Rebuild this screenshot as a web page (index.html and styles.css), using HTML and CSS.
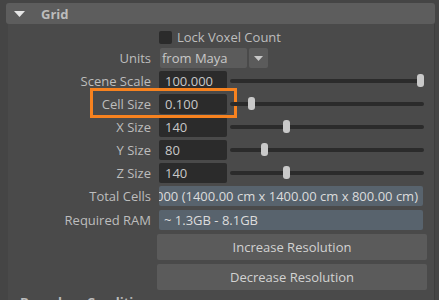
FILE: index.html
```html
<!DOCTYPE html>
<html>
<head>
<meta charset="utf-8">
<link rel="stylesheet" href="styles.css">
</head>
<body>
<div class="frame">
  <div class="header">
    <svg class="tri" width="11" height="6" viewBox="0 0 11 6"><path d="M0 0H11L5.5 6Z" fill="#e6e6e6"/></svg>
    <span class="title">Grid</span>
  </div>
  <div class="content">
    <div class="highlight"></div>
    <div class="row row-check">
      <span class="label"></span>
      <label class="check"><span class="box"></span><span>Lock Voxel Count</span></label>
    </div>
    <div class="row">
      <span class="label">Units</span>
      <div class="dropdown">
        <span class="dd-text">from Maya</span>
        <span class="dd-arrow"><svg width="9" height="5" viewBox="0 0 9 5"><path d="M0 0H9L4.5 5Z" fill="#c8c8c8"/></svg></span>
      </div>
    </div>
    <div class="row">
      <span class="label">Scene Scale</span>
      <div class="slider-field">
        <span class="field">100.000</span>
        <div class="slider"><div class="track"></div><div class="thumb" style="left:187px"></div></div>
      </div>
    </div>
    <div class="row">
      <span class="label">Cell Size</span>
      <div class="slider-field">
        <span class="field">0.100</span>
        <div class="slider"><div class="track"></div><div class="thumb" style="left:18px"></div></div>
      </div>
    </div>
    <div class="row">
      <span class="label">X Size</span>
      <div class="slider-field">
        <span class="field">140</span>
        <div class="slider"><div class="track"></div><div class="thumb" style="left:53px"></div></div>
      </div>
    </div>
    <div class="row">
      <span class="label">Y Size</span>
      <div class="slider-field">
        <span class="field">80</span>
        <div class="slider"><div class="track"></div><div class="thumb" style="left:31px"></div></div>
      </div>
    </div>
    <div class="row">
      <span class="label">Z Size</span>
      <div class="slider-field">
        <span class="field">140</span>
        <div class="slider"><div class="track"></div><div class="thumb" style="left:53px"></div></div>
      </div>
    </div>
    <div class="row row-info">
      <span class="label">Total Cells</span>
      <div class="info info-right"><span>1568000 (1400.00 cm x 1400.00 cm x 800.00 cm)</span></div>
    </div>
    <div class="row row-info">
      <span class="label">Required RAM</span>
      <div class="info"><span>~ 1.3GB - 8.1GB</span></div>
    </div>
    <div class="buttons">
      <button class="btn">Increase Resolution</button>
      <button class="btn">Decrease Resolution</button>
    </div>
    <div class="next-title">Boundary Conditions</div>
  </div>
</div>
</body>
</html>
```
FILE: styles.css
```css
html, body {
  margin: 0;
  padding: 0;
}
body {
  width: 439px;
  height: 300px;
  overflow: hidden;
  background: #454545;
  font-family: "Open Sans", "Noto Sans", sans-serif;
  font-size: 13px;
  color: #bdbdbd;
}
.frame {
  margin: 3px 0 0 6px;
  width: 429px;
  position: relative;
}
.header {
  height: 21px;
  background: #5d5d5d;
  border-radius: 3px;
  display: flex;
  align-items: center;
}
.tri {
  margin-left: 8px;
  margin-top: 1px;
}
.title {
  margin-left: 16px;
  font-weight: bold;
  font-size: 13px;
  color: #bcbcbc;
}
.content {
  margin-left: 2px;
  width: 427px;
  height: 290px;
  background: #4a4a4a;
  border-right: 1px solid #3d3d3d;
  padding-top: 4px;
  box-sizing: border-box;
}
.highlight {
  position: absolute;
  left: 84px;
  top: 85px;
  width: 141px;
  height: 24px;
  border: 3px solid #f7821f;
}
.row {
  display: grid;
  grid-template-columns: 143px 1fr;
  column-gap: 8px;
  align-items: center;
  height: 20px;
  margin-bottom: 3px;
}
.row-check {
  height: 17px;
  margin-bottom: 3px;
}
.label {
  text-align: right;
  white-space: nowrap;
}
.check {
  display: flex;
  align-items: center;
  gap: 5px;
}
.box {
  width: 13px;
  height: 13px;
  background: #2b2b2b;
  border-radius: 2px;
}
.dropdown {
  display: flex;
  gap: 2px;
  height: 20px;
  margin-left: 1px;
}
.dd-text {
  width: 87px;
  background: #5b5b5b;
  border-radius: 2px;
  padding-left: 2px;
  box-sizing: border-box;
  line-height: 20px;
  color: #c8c8c8;
}
.dd-arrow {
  width: 19px;
  background: #5b5b5b;
  border-radius: 2px;
  display: flex;
  align-items: center;
  justify-content: center;
}
.slider-field {
  display: flex;
  align-items: center;
  height: 20px;
}
.field {
  width: 68px;
  height: 20px;
  background: #2b2b2b;
  border-radius: 2px;
  padding-left: 6px;
  box-sizing: border-box;
  line-height: 20px;
  color: #c8c8c8;
}
.slider {
  position: relative;
  margin-left: 3px;
  width: 194px;
  height: 14px;
}
.track {
  position: absolute;
  left: 0;
  right: 0;
  top: 5px;
  height: 4px;
  border-radius: 2px;
  background: #2b2b2b;
}
.thumb {
  position: absolute;
  top: 0;
  width: 7px;
  height: 13px;
  border-radius: 3px;
  background: #c9c9c9;
}
.row-info {
  height: 20px;
  margin-bottom: 4px;
}
.info {
  width: 264px;
  height: 20px;
  background: #58636d;
  border-radius: 2px;
  padding: 0 5px;
  box-sizing: border-box;
  display: flex;
  align-items: center;
  overflow: hidden;
  white-space: nowrap;
  color: #dcdcdc;
}
.info-right {
  justify-content: flex-end;
}
.buttons {
  margin-left: 149px;
  width: 270px;
  display: flex;
  flex-direction: column;
  gap: 4px;
}
.btn {
  height: 26px;
  background: #5b5b5b;
  border: none;
  border-radius: 2px;
  font-family: inherit;
  font-size: 13px;
  color: #d2d2d2;
  padding: 0;
}
.next-title {
  margin: 3px 0 0 12px;
  font-weight: bold;
  color: #bcbcbc;
}
```
